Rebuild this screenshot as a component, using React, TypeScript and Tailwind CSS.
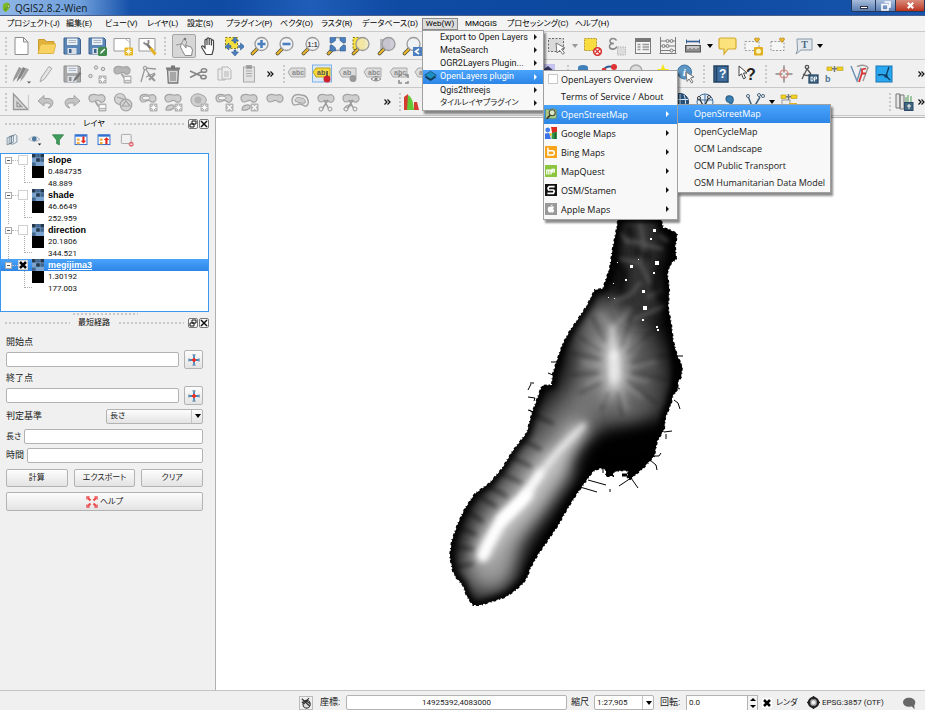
import React from "react";

const UI = "font-['Roboto','Liberation_Sans','Noto_Sans_CJK_JP',sans-serif] [font-feature-settings:'palt']";
const G = "#a3a3a3";
const L = "#cfcfcf";

/* ---------- small drawn parts shared by the toolbar icons ---------- */
const Blob = ({ f = L }: { f?: string }) => (
  <path d="M2 6c0-4 5-4 8-3 3 .6 4-1 6 0 3 1.500 2.500 6 0 7-2.500 1-3-1-5-1.500C9 8 8 10 5 10 3 10 2 8 2 6z" fill={f} stroke={G} strokeWidth="1.200" />
);
const Badge = ({ m = "star" }: { m?: string }) => (
  <g>
    <rect x="11.500" y="11.500" width="8" height="8" rx="1" fill="#b4b4b4" />
    {m === "star" ? (
      <path d="M15.500 12.500v6M12.500 15.500h6M13.400 13.400l4.200 4.200M17.600 13.400l-4.200 4.200" stroke="#fff" strokeWidth=".9" />
    ) : m === "x" ? (
      <path d="M13.300 13.300l4.400 4.400M17.700 13.300l-4.400 4.400" stroke="#fff" strokeWidth="1.300" />
    ) : (
      <path d="M13 17.500h5M13 13.500h5v2h-5z" fill="#fff" stroke="#fff" strokeWidth=".6" />
    )}
  </g>
);
const Lens = ({ children, f = "#eef3f7" }: { children?: React.ReactNode; f?: string }) => (
  <g>
    <path d="M2.500 17.500l4.500-4.500" stroke="#4a4a3a" strokeWidth="3.600" strokeLinecap="round" />
    <path d="M2.500 17.500l4-4" stroke="#eab62c" strokeWidth="2.200" strokeLinecap="round" />
    <circle cx="11.500" cy="8" r="6.500" fill={f} fillOpacity=".85" stroke="#9a9a9a" strokeWidth="1.300" />
    {children}
  </g>
);
const Floppy = ({ a = "#5b87b8", b = "#3f628c" }: { a?: string; b?: string }) => (
  <g>
    <path d="M2 2h15l1.500 1.500V18H2z" fill={a} stroke={b} />
    <rect x="5" y="2.500" width="10.500" height="6.500" fill="#e9eef4" />
    <path d="M6.500 4.500h7.500M6.500 6.500h7.500" stroke="#9ba9b8" strokeWidth=".8" />
    <rect x="5.500" y="12" width="9" height="6" fill="#d9dfe6" />
    <rect x="7" y="13" width="2.500" height="4" fill={b} />
  </g>
);
const Tag = ({ f = "#dcdcdc", s = "#aaa", t = "#8a8a8a", w = "abc" }: { f?: string; s?: string; t?: string; w?: string }) => (
  <g>
    <path d="M1 8l3-4h14v9H4z" fill={f} stroke={s} />
    <text x="5" y="11" fontSize="7" fontWeight="700" fill={t} fontFamily="Liberation Sans">{w}</text>
  </g>
);
const Sat = () => (
  <g>
    <rect x="3" y="3" width="5" height="3.500" fill="#f2d21f" stroke="#b39b1c" strokeWidth=".6" />
    <rect x="13" y="3" width="6" height="3.500" fill="#f2d21f" stroke="#b39b1c" strokeWidth=".6" />
    <path d="M8 4.700h5M10.500 2v6" stroke="#777" strokeWidth="1.500" />
  </g>
);
const Globe = () => (
  <g fill="none" stroke="#dbe9f7">
    <circle cx="10" cy="10" r="8.500" fill="#24507c" stroke="#1f3f60" />
    <path d="M2 7.500h16M2 12.500h16M10 2v16M6 3c-2 5-2 9 0 14M14 3c2 5 2 9 0 14" />
  </g>
);

const icons: Record<string, React.ReactNode> = {
  newfile: <path d="M4 1.500h8.500L17 6v12.500H4zM12.500 1.500V6H17" fill="#fff" stroke="#8c8c8c" />,
  open: <g><path d="M2.500 17V3.500h6l2 2H18V8" fill="#e2b23c" stroke="#c99a2c" /><path d="M2 17.500L4.500 8H20l-2.500 9.500z" fill="#f9d361" stroke="#d8aa35" strokeWidth=".8" /></g>,
  save: <Floppy />,
  saveas: <g><Floppy /><rect x="11" y="11" width="9" height="9" rx="1.500" fill="#3f8a4c" /><path d="M13 18l1-2.500 3.500-3 .8 1-3.300 3.500z" fill="#fff" /></g>,
  composer: <g><path d="M1 2.500h16V15H1z" fill="#fff" stroke="#9b9b9b" /><path d="M12 2.500l5 4" stroke="#bbb" /><rect x="11.500" y="11.500" width="8.500" height="8" rx="1" fill="#e6b51e" /><path d="M15.700 12.500v6M12.700 15.500h6M13.600 13.400l4.200 4.200M17.800 13.400l-4.200 4.200" stroke="#fff" /></g>,
  wrench: <g><path d="M1 2.500h16V15H1z" fill="#fff" stroke="#9b9b9b" /><path d="M9 8l4 5" stroke="#777" strokeWidth="2.600" /><path d="M12.500 12l5 6.500" stroke="#e4b12a" strokeWidth="3" /><path d="M5.500 6.500l2.500 2 2.500-1.500V4" fill="none" stroke="#888" strokeWidth="1.800" /></g>,
  touch: <g><path d="M2 9l5-1 3-5 3 3-2 4" fill="none" stroke="#999" /><circle cx="11" cy="3" r="1.300" fill="#777" /><path d="M7 8.500c.8-1 2-.3 2.600.6L12 12V9.500l5 1.500 1.500 3-1 5.500H11L8 14l-1.500-3z" fill="#fff" stroke="#888" /></g>,
  hand: <path d="M7 18.500L3 12c-1-1.700 0-2.500 1.200-1.800L6 12V4.500c0-1.500 2-1.500 2 0V9 3c0-1.500 2.200-1.500 2.200 0v6V3.600c0-1.500 2.200-1.500 2.200 0V9.500 5c0-1.500 2.100-1.500 2.100 0v8l-1.500 5.500z" fill="#fff" stroke="#444" strokeWidth="1.200" />,
  pansel: <g><rect x="1.500" y="1.500" width="12" height="11" fill="#f7df3e" stroke="#8d7c19" strokeDasharray="2 1.500" /><path d="M11 1l3.500 4H12v2h-2V5H7.500zM11 20l3.500-4H12v-2h-2v2H7.500zM1 10.500L5 7v2.500h2v2H5V14zM20.500 10.500L16.500 7v2.500h-2v2h2V14z" fill="#4b7fbd" stroke="#315c92" strokeWidth=".6" /></g>,
  zoomin: <Lens><path d="M11.500 4v8M7.500 8h8" stroke="#4b7fbd" strokeWidth="2.600" /></Lens>,
  zoomout: <Lens><path d="M7.500 8h8" stroke="#4b7fbd" strokeWidth="2.600" /></Lens>,
  zoom11: <Lens><text x="6.500" y="10.500" fontSize="7" fontWeight="700" fill="#444" fontFamily="Liberation Sans">1:1</text></Lens>,
  zoomfull: <g><Lens /><path d="M4 1.500h5.500v3l-2.500 2H4zM19.500 1.500v5h-3l-2.500-2v-3zM4 15V9.500h3l2.500 2.500v3zM19.500 15H14v-3l2.500-2.500h3z" fill="#4b7fbd" stroke="#315c92" strokeWidth=".6" /></g>,
  zoomsel: <g><rect x="2" y="1.500" width="11" height="12" fill="#f7df3e" stroke="#8d7c19" strokeDasharray="2 1.500" /><Lens f="#f3e9b4" /></g>,
  zoomlayer: <g><rect x="3" y="3" width="10" height="11" fill="#bbb" /><Lens f="#c9c6d4" /></g>,
  zoomlast: <g><Lens /><rect x="11" y="11" width="9" height="9" fill="#4b7fbd" /><path d="M17 13l-3.500 2.500L17 18" fill="none" stroke="#fff" strokeWidth="1.600" /></g>,
  select: <g><rect x="1.500" y="2.500" width="15" height="13" fill="#dadada" stroke="#666" strokeDasharray="2 1.500" /><path d="M9 7l9 5-3.500 1 3 4-1.800 1.300-3-4L10 17z" fill="#fff" stroke="#777" /></g>,
  deselect: <g><rect x="2.500" y="2.500" width="12" height="12" fill="#f9dc3f" stroke="#b49b2b" strokeDasharray="2 1" /><circle cx="15.500" cy="15.500" r="3.800" fill="#fff" stroke="#d8332f" strokeWidth="1.600" /><path d="M13 13l5 5M13 17.500l5-4.500" stroke="#d8332f" strokeWidth="1.200" /></g>,
  expr: <g><path d="M9.500 4.500C8 1.500 3 2 3 5c0 1.800 1.800 2.500 4 2.500C4 7.500 2.500 8.500 2.500 10.500c0 3.500 6 3.500 7.500 0" fill="none" stroke="#8b8b8b" strokeWidth="1.600" /><rect x="10.500" y="11" width="8" height="8" fill="#dcdcdc" stroke="#b6b6b6" strokeDasharray="1.500 1" /></g>,
  table: <g><rect x="2.500" y="2.500" width="15" height="15" fill="#f4f4f4" stroke="#7a7a7a" /><path d="M3 4.500h14" stroke="#777" strokeWidth="3" /><path d="M4.500 8.500h3M4.500 11h3M4.500 13.500h3M9.500 8.500h6.500M9.500 11h6.500M9.500 13.500h6.500" stroke="#999" strokeWidth="1.400" /></g>,
  abacus: <g fill="none" stroke="#7d7d7d"><path d="M2.500 1v17M17.500 1v17M1.500 17.500h17M3 5h14M3 10h14M3 14.500h14" /><path d="M8 5a1.500 1.500 0 103 0 1.500 1.500 0 10-3 0M12 5a1.500 1.500 0 103 0 1.500 1.500 0 10-3 0M4 10a1.500 1.500 0 103 0 1.500 1.500 0 10-3 0M8 10a1.500 1.500 0 103 0 1.500 1.500 0 10-3 0M12 14.500a1.500 1.500 0 103 0 1.500 1.500 0 10-3 0" fill="#e8e8e8" /></g>,
  ruler: <g><path d="M3 5.500h14" stroke="#2f5f96" strokeWidth="1.600" /><path d="M3.500 3.500v4M16.500 3.500v4" stroke="#2f5f96" /><rect x="2.500" y="9.500" width="15" height="6.500" fill="#8f8f8f" stroke="#555" /><path d="M5 10v3M7 10v2M9 10v3M11 10v2M13 10v3M15 10v2" stroke="#fff" /></g>,
  balloon: <path d="M4 2h13q2 0 2 2v7q0 2-2 2h-6l-4 5v-5H4q-2 0-2-2V4q0-2 2-2z" fill="#fbe27a" stroke="#d2aa2c" strokeWidth="1.200" />,
  bookadd: <g><rect x="2" y="5.500" width="14" height="9" fill="#f6f6f6" stroke="#999" strokeDasharray="2 1.500" /><path d="M14 6.500l-2.500-3c0-2 2-2 2.500-.8.500-1.200 2.500-1.200 2.500.8z" fill="#eab62c" stroke="#b88a18" strokeWidth=".8" /><rect x="11" y="11" width="9" height="8.500" rx="1" fill="#e2b01e" /><circle cx="15.500" cy="15.300" r="2.500" fill="#fff3bf" /></g>,
  book: <g><rect x="3" y="5.500" width="13" height="9" fill="#f6f6f6" stroke="#999" strokeDasharray="2 1.500" /><path d="M14 6.500l-2.500-3c0-2 2-2 2.500-.8.500-1.200 2.500-1.200 2.500.8z" fill="#eab62c" stroke="#b88a18" strokeWidth=".8" /></g>,
  textann: <g><path d="M3 3h15v11H7l-5 4 1.500-4z" fill="#e3e8ed" stroke="#8798a8" /><text x="7.200" y="12" fontSize="10" fontWeight="700" fill="#4c6a86" fontFamily="Liberation Serif">T</text></g>,
  pencils: <g><path d="M1.500 18l1.500-5L8 3l3 1.500-5 9z" fill="#9a9a9a" /><path d="M5.500 18L7 13l5-10 3 1.500-5 9z" fill="#858585" /><path d="M9 18l1.500-5L15 4l3 1.500-5 8z" fill="#a5a5a5" /><path d="M16 17.500h4l-2 2z" fill="#555" /></g>,
  pencil: <path d="M4 18l1.500-5L13 2.500l3 2L8.500 15z" fill="#e3e3e3" stroke="#aaa" />,
  saveg: <g><Floppy a="#a9a9a9" b="#8f8f8f" /><path d="M11 18l1.500-4 5-6 2 1.500-5 6z" fill="#777" /></g>,
  dots: <g><g fill="#e2e2e2" stroke="#999"><circle cx="9" cy="3.500" r="1.700" /><circle cx="16" cy="5" r="1.700" /><circle cx="3.500" cy="12" r="1.700" /></g><Badge /></g>,
  blobadd: <g><Blob f="#b5b5b5" /><path d="M9 10c2 0 2 4 5 5" fill="none" stroke={G} strokeWidth="2" /><Badge m="h" /></g>,
  node: <g fill="none" stroke="#999"><path d="M3 18L7 4l11 1M7 4l8 12M8 13l9-4" strokeWidth="1.300" /><circle cx="7" cy="4" r="1.800" fill="#ddd" /><path d="M10 10l7 7M17 10l-6 6" strokeWidth="2" /></g>,
  trash: <g fill="none" stroke="#777"><path d="M4.500 6h11l-.8 13H5.300z" fill="#d8d8d8" strokeWidth="1.300" /><path d="M3 4.500h14M8 2.500h4" strokeWidth="1.800" /><path d="M8 8v9M10 8v9M12 8v9" /></g>,
  cut: <g fill="none" stroke="#858585" strokeWidth="1.500"><path d="M2 7l11 5M2 13.500l12-6" /><ellipse cx="16" cy="6.500" rx="2.700" ry="1.800" /><ellipse cx="15.500" cy="13" rx="2.700" ry="1.800" /></g>,
  copy: <g fill="#ededed" stroke="#b5b5b5"><path d="M4 5h7v11H4z" /><path d="M8 3h6l3 3v9H8zM10 8h5M10 10h5M10 12h5" /></g>,
  paste: <g fill="#e3e3e3" stroke="#a9a9a9"><rect x="4.500" y="3" width="11" height="15" /><rect x="7.500" y="1.500" width="5" height="3" fill="#999" /><path d="M7 7h6M7 9.500h6M7 12h6" /></g>,
  tag: <Tag />,
  tagy: <g><rect x=".5" y="1" width="19" height="17" fill="#dce9f8" stroke="#7fb0e6" /><Tag f="#f6da3b" s="#bfa321" t="#555" w="ab" /><circle cx="15" cy="15" r="3.500" fill="#cf2030" /><path d="M15 12V7" stroke="#444" strokeWidth="1.500" /></g>,
  tagpin: <g><Tag w="ab" /><circle cx="15" cy="14.500" r="3.500" fill="#999" /></g>,
  tageye: <g><Tag /><path d="M8 15q5-5 10 0-5 4-10 0z" fill="#f4f4f4" stroke="#888" /><circle cx="13" cy="15" r="1.700" fill="#888" /></g>,
  tagbox: <g><Tag /><path d="M10 11h3M16 11h3v3M19 17v2h-3M13 19h-3v-3M10 13v-2" fill="none" stroke="#888" strokeWidth="1.500" /></g>,
  purple: <g><rect x="0" y="0" width="14" height="14" fill="#c4c3ef" /><path d="M2 6l5-4 6 5" fill="#33335c" /></g>,
  bluecyl: <g><ellipse cx="8" cy="3.500" rx="5" ry="2.500" fill="#3f80b8" /><path d="M3 4v8h10V4" fill="#3f80b8" /></g>,
  red: <g><path d="M3 7q3-6 10-4" stroke="#2f5f96" fill="none" strokeWidth="2" /><circle cx="14" cy="3" r="3" fill="#d33" /><circle cx="4" cy="6" r="2.300" fill="#d33" /></g>,
  grayo: <circle cx="10" cy="7" r="6" fill="#ddd" stroke="#aaa" strokeWidth="1.500" />,
  star: <path d="M12 0l2 5 4 0-3 4 1 5-4-3-4 3 1-5-3-4h4z" fill="#f7e21c" />,
  info: <g><circle cx="8.500" cy="8" r="7" fill="#5f97c4" stroke="#3e75a4" /><text x="6.800" y="12" fontSize="11" fontStyle="italic" fontWeight="700" fill="#fff" fontFamily="Liberation Serif">i</text><path d="M10 8l8 5-3.500 1 2.500 4-1.500 1-2.500-4-2 2.500z" fill="#fff" stroke="#777" /></g>,
  helpbook: <g><path d="M3 2h14v16H3z" fill="#3e6ea0" stroke="#22405f" strokeWidth="1.400" /><path d="M5.500 2v16" stroke="#22405f" strokeWidth="1.500" /><text x="8" y="14" fontSize="12" fontWeight="700" fill="#fff" fontFamily="Liberation Sans">?</text></g>,
  whats: <g><path d="M2 2l8 7H6.500l2 5-2 .8-2-5L2 12z" fill="#fff" stroke="#444" /><text x="9" y="16" fontSize="16" fontWeight="700" fill="#222" fontFamily="Liberation Sans">?</text></g>,
  cross: <g fill="none" stroke="#777"><path d="M10 1.500v7M10 11.500v7M1.500 10h7M11.500 10h7" stroke="#555" /><circle cx="10" cy="10" r="4" stroke="#e07a72" strokeWidth="1.200" /></g>,
  compass: <g fill="none" stroke="#555" strokeWidth="1.300"><circle cx="8" cy="3" r="1.700" /><path d="M8 5L3 15M8 5l4 5M4 10q4 3 8 0" /><rect x="10" y="11" width="9" height="8" fill="#3e6687" stroke="#2b4c68" /><path d="M12 17v-4h1.500q1.500 2 0 4zM15.500 17.500V13h2v2h-2" stroke="#fff" strokeWidth=".9" /></g>,
  sat: <g><Sat /><text x="1" y="18" fontSize="9" fontWeight="700" fill="#4d7493" fontFamily="Liberation Sans">b</text></g>,
  topo: <g fill="none" strokeWidth="1.400"><path d="M2 2l6 15L12 4" stroke="#6a8fb1" /><path d="M8 2.500q8-3 11 1L14 17" stroke="#999" /><path d="M17 4.500l-4 1v4h4M13 9l-3 9" stroke="#d83434" strokeWidth="1.800" /></g>,
  bluesq: <g><rect x="2" y="2" width="16" height="16" fill="#2aa7ee" stroke="#1975b5" /><path d="M4 11q5-1 8 1l4 4M12 12l3-9" fill="none" stroke="#0d3d60" strokeWidth="1.300" /><circle cx="12" cy="12" r="1.800" fill="#0d3d60" /></g>,
  triangle: <g fill="#dadada" stroke="#999" strokeWidth="1.300"><path d="M2.500 2v15.500H17z" /><path d="M6 10v4.500h4.500z" fill="#f0f0f0" /><path d="M17.500 3v15" stroke="#ccc" /></g>,
  undo: <path d="M8 3.500v3h4c7 0 6 9 0 9.500 3-2 3-5 0-5H8v3L2 9z" fill="#c4c4c4" stroke="#a2a2a2" />,
  redo: <path d="M12 3.500v3H8c-7 0-6 9 0 9.500-3-2-3-5 0-5h4v3L18 9z" fill="#c4c4c4" stroke="#a2a2a2" />,
  blobh: <g><Blob /><path d="M8 10c2 0 2 4 5 5" fill="none" stroke={G} strokeWidth="2" /><Badge m="h" /></g>,
  circles: <g fill="#d4d4d4" stroke={G} strokeWidth="1.200"><circle cx="7" cy="7" r="5.500" /><circle cx="13" cy="13" r="5.800" /><path d="M4 5l9 3M9 14l4-5 4 5z" /></g>,
  ring: <g><Blob /><ellipse cx="8" cy="6" rx="4" ry="2" fill="#f3f3f3" stroke={G} /><Badge /></g>,
  part: <g><Blob /><path d="M3 18c0-5 6-6 8-4 1 2-3 5-8 4z" fill={L} stroke={G} strokeWidth="1.200" /><Badge /></g>,
  fillr: <g><path d="M2 9c-1-6 6-9 11-6 6 2 5 8 1 10C8 16 3 14 2 9z" fill={L} stroke={G} /><circle cx="9" cy="8" r="3.500" fill="#b4b4b4" /><Badge /></g>,
  ringx: <g><Blob /><ellipse cx="8" cy="6" rx="4" ry="2" fill="#f3f3f3" stroke={G} /><Badge m="x" /></g>,
  partx: <g><Blob /><path d="M3 18c0-5 6-6 8-4 1 2-3 5-8 4z" fill={L} stroke={G} strokeWidth="1.200" /><Badge m="x" /></g>,
  reshape: <Blob />,
  offset: <g><path d="M2 9c0-7 6-7 9-6 6 0 8 5 7 9-2 5-5 0-8 0-4 0-7 4-8-3z" fill="#ececec" stroke={G} strokeWidth="1.400" /><path d="M5 9c0-4 4-4 6-3 3 0 5 2 4 5-2 1-8-1-10-2z" fill={L} stroke={G} /></g>,
  split: <g><Blob /><path d="M5 19l7-11M14 19L8 8" stroke="#999" strokeWidth="1.500" /><circle cx="5" cy="17" r="2" fill="#eee" stroke="#999" /><circle cx="14" cy="17" r="2" fill="#eee" stroke="#999" /></g>,
  split2: <g><Blob /><path d="M3 18c0-5 6-6 8-4" fill={L} stroke={G} /><path d="M5 19l7-11M14 19L8 8" stroke="#999" strokeWidth="1.500" /><circle cx="5" cy="17" r="2" fill="#eee" stroke="#999" /><circle cx="14" cy="17" r="2" fill="#eee" stroke="#999" /></g>,
  hist: <g><path d="M2 18V5l4-3v16z" fill="#d63b2f" /><path d="M5 18l1-15q5 2 6 15z" fill="#63c837" /><path d="M12 18v-8h3l2 8z" fill="#d63b2f" /></g>,
  globe: <Globe />,
  globev: <g><g fill="#e8f0f8" stroke="#3f6f9f"><circle cx="10" cy="10" r="8" /><path d="M2 8h16M10 2v16" /></g><path d="M4 6l5 9 5-10" fill="none" stroke="#333" strokeWidth="1.300" /><circle cx="4" cy="6" r="1.500" fill="#fff" stroke="#333" /><circle cx="14" cy="5" r="1.500" fill="#fff" stroke="#333" /></g>,
  comma: <g><path d="M6 14c6-1 8-4 7-8-1-3-7-3-7 1 0 3 3 4 5 3" fill="#3c7fb0" stroke="#2a648f" strokeWidth="1.200" /><rect x="12" y="12" width="7" height="6" fill="#6fbf55" /></g>,
  vnode: <g><path d="M3 4l5 13L15 5" fill="none" stroke="#44617a" strokeWidth="1.500" /><g fill="#fff" stroke="#44617a"><circle cx="3" cy="4" r="1.500" /><circle cx="14" cy="3" r="1.500" /><circle cx="18" cy="4" r="1.500" /></g><rect x="12" y="12" width="7" height="6" fill="#e6b51e" /></g>,
  satbox: <g><rect x="4" y="8" width="8" height="9" fill="#eee" stroke="#999" /><rect x="11" y="11" width="8" height="7" fill="#e6b51e" /><Sat /></g>,
  gras: <g fill="#e6e6e6" stroke="#777"><path d="M2 2h4v14H2zM6 3h4v14H6z" /><path d="M12 12V5M14 12V3M17 12V4" stroke="#4f9b55" /><rect x="10.500" y="10.500" width="8.500" height="8" fill="#42647e" stroke="#2b4c68" /><path d="M13 14h4M15 12v5" stroke="#fff" /></g>,
  layers: <g fill="#e8eef4" stroke="#5f7586"><path d="M3 7l6-3v10l-6 3zM6 6l6-3v10l-6 3zM9 5l6-3 2 2v9l-6 3H9z" /></g>,
  eye: <g><path d="M1 9q8-8 16 0-8 6-16 0z" fill="#e9eef2" stroke="#98a4ae" /><circle cx="9" cy="8.500" r="3.400" fill="#4b779e" /><path d="M14 15h5l-2.500 3z" fill="#222" /></g>,
  filter: <path d="M2 2.500h16L12 10v7l-4-2v-5z" fill="#3f9d5b" stroke="#2a7a42" />,
  expand: <g><rect x="1.500" y="2.500" width="17" height="14" fill="#fff" stroke="#2f6fd0" strokeWidth="1.400" /><path d="M2 4h16" stroke="#2f6fd0" strokeWidth="2.500" /><path d="M4 8h4v3H4zM4 13h4v3H4z" fill="#f3ad3a" /><path d="M12 5h3v6h2.500l-4 4-4-4H12z" fill="#e3261c" /></g>,
  collapse: <g><rect x="1.500" y="2.500" width="17" height="14" fill="#fff" stroke="#2f6fd0" strokeWidth="1.400" /><path d="M2 4h16" stroke="#2f6fd0" strokeWidth="2.500" /><path d="M4 8h4v3H4zM4 13h4v3H4z" fill="#f3ad3a" /><path d="M12 16h3v-6h2.500l-4-4-4 4H12z" fill="#e3261c" /></g>,
  remove: <g><rect x="2" y="2" width="14" height="13" rx="1" fill="#f1f1f1" stroke="#aaa" strokeWidth="1.400" /><circle cx="16" cy="16" r="3.500" fill="#e0656b" /><path d="M14 16h4" stroke="#fff" strokeWidth="1.500" /></g>,
  target: <g><path d="M10 1v18M1 10h18" stroke="#4187c0" strokeWidth="3" /><path d="M7 1.500h6M7 18.500h6M1.500 7v6M18.500 7v6" stroke="#8a9aa8" strokeWidth="1.600" /><path d="M10 6.500v7M6.500 10h7" stroke="#e8322a" strokeWidth="3.600" /></g>,
  lifebuoy: <g fill="none" stroke="#ec4b4b" strokeWidth="3.600"><path d="M3 3l4.500 4.500M17 3l-4.500 4.500M3 17l4.500-4.500M17 17l-4.500-4.500" /><path d="M1.500 6V1.500H6M14 1.500h4.500V6M1.500 14v4.500H6M18.500 14v4.500H14" strokeWidth="2" /></g>,
  raster: <g><path d="M0 0h20v20H0z" fill="#7aa4cf" /><path d="M0 0h6v6H0zM14 0h6v6h-6zM7 7h6v6H7z" fill="#26384c" /><path d="M7 0h6v6H7zM0 14h6v6H0zM14 7h6v6h-6z" fill="#41658c" /></g>,
  olayers: <g><path d="M10 5l9 6-9 6-9-6z" fill="#143a52" /><path d="M10 2l9 6-9 6-9-6z" fill="#1c8fc4" stroke="#173f58" /></g>,
  osm: <g><path d="M1 2l6 1 6-2 6 2v14l-6 1-6-1-6 1z" fill="#a8cf8c" stroke="#5e7f48" /><path d="M2 6l8 7M4 14l6-5" stroke="#d99b42" /><circle cx="12" cy="8" r="5" fill="#eaf3e4" fillOpacity=".7" stroke="#4a4a3a" strokeWidth="1.800" /><path d="M8.500 12L3 18" stroke="#353525" strokeWidth="2.800" /></g>,
  google: <g><path d="M0 0h20v20H0z" fill="#fff" /><path d="M10 0h10v9l-8 2z" fill="#e02b20" /><path d="M11 10l9-2v12h-9z" fill="#2d9a45" /><path d="M0 11l7-1 3 10H0z" fill="#3b73e8" /><circle cx="4.500" cy="5" r="4" fill="#4382ee" /><path d="M7 9l5 3-3 4z" fill="#f4c21c" /><path d="M17 10v10" stroke="#2c2c2c" strokeWidth="1.500" /></g>,
  bing: <g><rect width="20" height="20" rx="1" fill="#f8a51b" /><path d="M5 3v12h7a3.500 3.500 0 000-7H5" fill="none" stroke="#fff" strokeWidth="2.500" /></g>,
  mapquest: <g><rect width="20" height="20" rx="1" fill="#8cc63f" /><path d="M3 16V8.500h7V16M6.500 9v7M12 7.500h3.500v4H12z" fill="none" stroke="#fff" strokeWidth="2.200" /></g>,
  stamen: <g><rect width="20" height="20" fill="#111" /><path d="M16 4.500H7L5 7l1 3h8l1.500 2-1.500 3.500H4" fill="none" stroke="#fff" strokeWidth="2.800" /></g>,
  apple: <g><rect width="20" height="20" fill="#999" /><path d="M10 6.500c2-1.500 4-1 5 .5-2 1.500-1.500 4 .5 5-1 3-2.500 5-4 4-1-.6-2-.6-3 0-2 1-4-3-4-6 0-3.500 3-5 5.500-3.500zM10 5.500c0-2 1-3 2.500-3.500 0 2-1 3-2.500 3.500z" fill="#fff" /></g>,
  mouse: <g><ellipse cx="11" cy="12" rx="6" ry="6.500" fill="#ddd" stroke="#333" strokeWidth="1.800" /><path d="M3 3l13 12M9 6l8 5M6 12l5-6M11 6l4-4M3 8l3 2" fill="none" stroke="#333" strokeWidth="2" /></g>,
  crs: <g><circle cx="10" cy="10" r="7" fill="#aaa" stroke="#222" strokeWidth="3.500" /><path d="M10 0v5M10 15v5M0 10h5M15 10h5" stroke="#222" strokeWidth="2.500" /><circle cx="10" cy="10" r="3" fill="#eee" /></g>,
  bubble: <path d="M10 2.500c-5 0-8.500 2.800-8.500 6.500s3.500 6.500 8.500 6.500l4-.5 4 4-.5-5.500c1-1.200 1.500-2.800 1.500-4.500 0-3.700-4-6.500-9-6.500z" fill="#686868" />,
  qgis: <g><path d="M4 4q7-6 12 0 1 8-7 14-8-1-5-14z" fill="#7bb928" /><path d="M7 15L14 4l2 5-5 1z" fill="#f6f2a0" stroke="#3d6b1a" /></g>,
};

const Icon = ({ n, c = "size-5" }: { n: string; c?: string }) => (
  <svg viewBox="0 0 20 20" className={`${c} shrink-0`} aria-hidden="true">{icons[n]}</svg>
);

const Tool = ({ n }: { n: string }) => (
  <button type="button" aria-label={n} className="flex size-5 shrink-0 items-center justify-center"><Icon n={n} /></button>
);
const Group = ({ w, items }: { w: string; items: string }) => (
  <div className={`flex shrink-0 items-center justify-between ${w}`}>{items.split(" ").map((n, i) => <Tool key={i} n={n} />)}</div>
);
const Grip = ({ w }: { w: string }) => (
  <div className={`flex h-full shrink-0 justify-center py-1 ${w}`}>
    <div className="w-1 bg-[radial-gradient(circle,#c9c9c9_1px,transparent_1px)] bg-[length:4px_4px]" />
  </div>
);
const Drop = ({ w, c = "border-t-black" }: { w: string; c?: string }) => (
  <button type="button" aria-label="more" className={`flex shrink-0 justify-center ${w}`}>
    <span className={`border-x-[3px] border-t-4 border-x-transparent ${c}`} />
  </button>
);
const More = ({ w }: { w: string }) => (
  <button type="button" aria-label="overflow" className={`flex shrink-0 justify-center ${w}`}>
    <svg viewBox="0 0 7 6" className="h-[6px] w-[7px]"><path d="M.5.500L3 3 .5 5.500M3.500.500L6 3 3.500 5.500" fill="none" stroke="#111" strokeWidth="1.200" /></svg>
  </button>
);
const Bar = ({ children }: { children: React.ReactNode }) => (
  <div className="flex h-7 items-center overflow-hidden border-b border-[#c9c9c9] bg-[#f0f0f0]">{children}</div>
);

const Arrow = () => <span className="ml-auto border-y-[3px] border-l-[3px] border-y-transparent border-l-current" />;
const HL = "bg-linear-to-b from-[#4aa3fb] to-[#2c86e6] text-white";
const MENU = "absolute border border-[#a0a0a0] bg-[#f8f8f8] shadow-[2px_3px_2px_rgba(0,0,0,.45)]";

function OsmMenu() {
  return (
    <ul className={`${MENU} -top-px left-full z-30 w-[154px] pb-px`}>
      {["OpenStreetMap", "OpenCycleMap", "OCM Landscape", "OCM Public Transport", "OSM Humanitarian Data Model"].map((t, i) => (
        <li key={t}>
          <button type="button" className={`flex w-full items-center pl-4 whitespace-nowrap ${i === 0 ? "h-[18px] " + HL : "h-[17px] text-[#1a1a1a]"}`}>{t}</button>
        </li>
      ))}
    </ul>
  );
}

function OpenLayersMenu() {
  const rows = [["osm", "OpenStreetMap"], ["google", "Google Maps"], ["bing", "Bing Maps"], ["mapquest", "MapQuest"], ["stamen", "OSM/Stamen"], ["apple", "Apple Maps"]];
  return (
    <ul className={`${MENU} top-0 left-full z-20 w-[135px] font-['Open_Sans','Noto_Sans',sans-serif] text-[9px] text-[#111]`}>
      <li>
        <label className="flex h-[17px] items-center gap-[3px] pl-1">
          <input type="checkbox" className="size-[10px] appearance-none border border-[#c8c8c8] bg-white" />OpenLayers Overview
        </label>
      </li>
      <li><button type="button" className="flex h-[17px] items-center pl-[17px] whitespace-nowrap">Terms of Service / About</button></li>
      {rows.map(([n, t], i) => (
        <li key={t} className="relative">
          <button type="button" className={`flex h-[19px] w-full items-center gap-1 pr-2 pl-px ${i === 0 ? HL : ""}`}>
            <Icon n={n} c="size-3" />{t}<Arrow />
          </button>
          {i === 0 && <OsmMenu />}
        </li>
      ))}
    </ul>
  );
}

function WebMenu() {
  const rows = ["Export to Open Layers", "MetaSearch", "OGR2Layers Plugin...", "OpenLayers plugin", "Qgis2threejs", "タイルレイヤプラグイン"];
  return (
    <ul className={`${MENU} top-full left-0 z-10 w-[122px]`}>
      {rows.map((t, i) => (
        <li key={t} className="relative">
          <button type="button" className={`flex w-full items-center pr-[6px] whitespace-nowrap ${i === 5 ? "text-[8px]" : "text-[9px]"} ${i === 3 ? "h-[14px] pl-px " + HL : "h-[13px] pl-[17px] text-[#1a1a1a]"}`}>
            {i === 3 && <span className="flex w-4"><Icon n="olayers" c="size-[13px]" /></span>}{t}<Arrow />
          </button>
          {i === 3 && <OpenLayersMenu />}
        </li>
      ))}
    </ul>
  );
}

const menus = [
  ["プロジェクト(J)", "w-[59px]"], ["編集(E)", "w-[39px]"], ["ビュー(V)", "w-[42px]"], ["レイヤ(L)", "w-10"], ["設定(S)", "w-[39px]"],
  ["プラグイン(P)", "w-[54px]"], ["ベクタ(O)", "w-[41px]"], ["ラスタ(R)", "w-[41px]"], ["データベース(D)", "w-[60px]"],
];

function DockTitle({ t }: { t: string }) {
  const dots = "h-1 flex-1 bg-[radial-gradient(circle,#c9c9c9_1px,transparent_1px)] bg-[length:4px_4px]";
  const b = "flex size-[10px] items-center justify-center rounded-xs border border-[#777] bg-[#f6f6f6]";
  return (
    <div className="flex h-[14px] items-center gap-1 pr-px pl-1">
      <div className={dots} /><h2 className="px-1 text-[8px] text-black">{t}</h2><div className={dots} />
      <div className="flex gap-px">
        <button type="button" aria-label="float" className={b}><svg viewBox="0 0 8 8" className="size-2"><path d="M3 1h4v3H3zM1 4h4v3H1z" fill="#fff" stroke="#111" /></svg></button>
        <button type="button" aria-label="close" className={b}><svg viewBox="0 0 8 8" className="size-2"><path d="M1 1l6 6M7 1L1 7" stroke="#111" strokeWidth="1.500" /></svg></button>
      </div>
    </div>
  );
}

function Tree() {
  const layers = [["slope", "0.484735", "48.889"], ["shade", "46.6649", "252.959"], ["direction", "20.1806", "344.521"], ["megijima3", "1.30192", "177.003"]];
  return (
    <ul className="mr-px h-[159px] border border-[#3b97f0] bg-white text-[8px] text-[#111]">
      {layers.map(([n, a, b], i) => {
        const on = i === 3;
        return (
          <li key={n} className="h-[35px]">
            <label className={`flex h-3 items-center pl-1 ${on ? HL : ""}`}>
              <span className="flex size-[7px] items-center justify-center border border-[#aaa] bg-white"><span className="h-px w-[3px] bg-[#555]" /></span>
              <span className="w-[6px] border-t border-dotted border-[#bbb]" />
              <span className="grid">
                <input type="checkbox" defaultChecked={on} className="col-start-1 row-start-1 size-[10px] appearance-none border border-[#d0d0d0] bg-white" />
                {on && <svg viewBox="0 0 10 10" className="col-start-1 row-start-1 size-[10px]"><path d="M2 2l6 6M8 2L2 8" stroke="#000" strokeWidth="2.500" /></svg>}
              </span>
              <Icon n="raster" c="ml-[4px] size-3" />
              <span className={`ml-1 font-['Liberation_Sans',sans-serif] text-[9px] font-bold ${on ? "underline" : "text-black"}`}>{n}</span>
            </label>
            <div className="flex pl-[7px]">
              <div className={`w-4 ${on ? "" : "border-l border-dotted border-[#aaa]"}`} />
              <div className="h-[17px] w-2 border-b border-l border-dotted border-[#aaa]" />
              <div className="size-3 bg-black" />
              <div className="pl-1"><p className="h-3 leading-3">{a}</p><p className="h-[11px] leading-[11px]">{b}</p></div>
            </div>
          </li>
        );
      })}
    </ul>
  );
}

const FIELD = "h-[15px] min-w-0 flex-1 rounded-xs border border-[#b3b3b3] bg-white text-[8px]";
const BTN = "flex items-center justify-center rounded-xs border border-[#b3b3b3] bg-linear-to-b from-[#fdfdfd] to-[#e3e3e3] text-[8px]";

function PointField({ id, t }: { id: string; t: string }) {
  return (
    <div className="h-9">
      <label htmlFor={id} className="block h-[14px] leading-[12px]">{t}</label>
      <div className="flex items-center gap-[5px]">
        <input id={id} className={FIELD} />
        <button type="button" aria-label={t} className={`${BTN} size-[19px]`}><Icon n="target" c="size-3" /></button>
      </div>
    </div>
  );
}

function Terrain() {
  const outline = "M619 214 L660 216 663 227 670 229 677 233 675 246 676 258 671 262 667 272 669 287 668 307 671 323 673 340 677 355 682 365 681 376 678 380 677 390 673 393 671 402 665 417 664 428 657 440 654 455 643 467 630 478 627 476 629 470 622 469 613 471 613 475 606 475 606 468 600 467 593 470 587 478 577 492 570 503 564 513 558 524 545 543 538 553 530 567 527 576 523 582 514 590 505 596 493 600 480 604 473 604 467 595 463 584 456 576 453 570 450 555 452 540 458 523 465 508 475 493 490 482 502 468 513 450 527 432 532 413 537 399 542 385 552 384 553 373 557 360 563 343 570 330 577 320 587 305 595 289 603 288 610 267 613 247 617 227z";
  const specks = [[654, 229, 3], [651, 238, 2], [656, 261, 4], [631, 265, 3], [654, 272, 2], [626, 279, 2], [643, 290, 3], [644, 306, 4], [643, 319, 2], [657, 326, 2], [658, 329, 2], [614, 283, 1], [609, 297, 1], [615, 298, 1], [618, 262, 1], [639, 259, 1]];
  const area = { filterUnits: "userSpaceOnUse" as const, x: 400, y: 180, width: 340, height: 460 };
  return (
    <svg className="block h-full w-full" role="img" aria-label="megijima3">
      <defs>
        <clipPath id="isle"><path d={outline} /></clipPath>
        <filter id="b2" {...area}><feGaussianBlur stdDeviation="2" /></filter>
        <filter id="b3" {...area}><feGaussianBlur stdDeviation="3" /></filter>
        <filter id="b8" {...area}><feGaussianBlur stdDeviation="8" /></filter>
        <filter id="b14" {...area}><feGaussianBlur stdDeviation="14" /></filter>
      </defs>
      <g transform="translate(-216 -117)">
        <path d={outline} fill="#000" stroke="#000" strokeWidth="2" strokeDasharray="3 2 1 3" />
        <g clipPath="url(#isle)" fill="none" strokeLinecap="round" strokeLinejoin="round">
          <path d="M606 325L598 390 562 430 526 480 496 525 484 572" stroke="#777" strokeWidth="54" filter="url(#b14)" />
          <path d="M616 335L622 370 628 400" stroke="#777" strokeWidth="56" filter="url(#b14)" />
          <path d="M644 345l10 30-15 30" stroke="#555" strokeWidth="26" filter="url(#b14)" />
          <path d="M640 225L642 300" stroke="#333" strokeWidth="40" filter="url(#b8)" />
          <path d="M550 468L528 500 502 532 492 565" stroke="#999" strokeWidth="38" filter="url(#b8)" />
          <path d="M578 430L548 468 526 500 502 526 484 552" stroke="#ccc" strokeWidth="18" filter="url(#b8)" />
          <path d="M614 345L614 385" stroke="#c4c4c4" strokeWidth="22" filter="url(#b8)" />
          <path d="M584 424L560 448 542 470 522 500 498 524 482 556" stroke="#fff" strokeWidth="4" filter="url(#b3)" />
          <path d="M540 472L522 498 500 518" stroke="#fff" strokeWidth="7" filter="url(#b3)" />
          <path d="M527 494L500 522 487 545 483 555" stroke="#fff" strokeWidth="11" filter="url(#b3)" />
          <path d="M612 326L614 384" stroke="#fff" strokeOpacity=".8" strokeWidth="4" filter="url(#b3)" />
          <path d="M614 354L615 376" stroke="#fff" strokeWidth="8" filter="url(#b3)" />
          <path d="M614 366L590 342M614 360L600 335M614 366L582 362M614 370L586 384M616 366L640 340M616 362L628 335M616 368L655 360M616 372L648 380M616 374L642 396M614 375L626 408M614 375L604 402M612 330L630 308M612 330L600 312" stroke="#ccc" strokeOpacity=".5" strokeWidth="3" filter="url(#b3)" />
          <path d="M600 350l-20-14M600 358l-28-6M598 372l-26 2M600 382l-20 10M628 352l22-20M632 362l36-8M632 372l34 6M628 380l28 22M622 345l10-30M604 340l-12-24M618 392l4 22M608 392l-6 16" stroke="#000" strokeOpacity=".28" strokeWidth="3" filter="url(#b2)" />
          <path d="M640 222L644 243 662 248M644 243L626 238M644 243L640 262 650 282M620 258L640 262M634 318L667 304M620 232l8 10M660 235l8 5M640 282l-10 12-16 6M648 296l12-6" stroke="#888" strokeOpacity=".45" strokeWidth="3" filter="url(#b2)" />
          <path d="M615 262L625 272 620 290M660 262L655 285 662 300M634 250L650 256M628 226l4 10" stroke="#000" strokeOpacity=".8" strokeWidth="5" filter="url(#b3)" />
          <path d="M502 473l18 8M513 457l17 8M524 440l16 8M534 414l18 8M490 486l16 9M480 496l15 9M468 511l14 9M461 527l14 6M456 546l16 2M458 566l14-3" stroke="#000" strokeOpacity=".4" strokeWidth="4" filter="url(#b2)" />
          <path d="M602 476Q592 462 602 452T655 436" stroke="#000" strokeWidth="28" filter="url(#b8)" />
          <path d="M676 350V400L655 450" stroke="#000" strokeWidth="8" filter="url(#b3)" />
          <path d={outline} stroke="#000" strokeWidth="8" filter="url(#b3)" />
        </g>
        {specks.map(([x, y, s]) => <rect key={`${x}-${y}`} x={x - 1} y={y - 1} width={s} height={s} fill="#fff" />)}
        <g fill="none" stroke="#000">
          <path d="M551 361h6M548 372l5 2M530 382h4M531 383l-3 6M528 396l7 1-1 3M528 409l6 2M529 409l5 3M676 355h7M676 386l4 2M674 399l4 3 2 6M664 431l8-1M666 433l0 5M653 455l6 0 2-3M650 459l6 5 1 5M619 485l12-8 7 10M588 479l18 5M580 486l17 5M603 468v4M610 488v3" />
          <path d="M622 474h5" strokeWidth="3" />
        </g>
      </g>
    </svg>
  );
}

export default function App() {
  return (
    <div className={`flex h-screen flex-col overflow-hidden bg-[#f0f0f0] text-[9px] leading-none text-[#1a1a1a] ${UI}`}>
      <header className="flex h-[15px] shrink-0 items-center bg-[linear-gradient(90deg,#8fb6e6_0,#6f9fdc_80px,#1651a9_130px,#0f4aa3_220px,#1f5db8_310px,#0f4aa3_400px,#0d489f_70%,#1855ad_100%)]">
        <Icon n="qgis" c="ml-px size-[11px]" />
        <h1 className="ml-[3px] font-['Open_Sans','Noto_Sans',sans-serif] text-[10px] text-[#101820]">QGIS2.8.2-Wien</h1>
        <div className="ml-auto flex h-3 self-start overflow-hidden rounded-b-xs border border-t-0 border-[#26375c]">
          <button type="button" aria-label="minimize" className="flex w-6 items-center justify-center border-r border-[#26375c] bg-linear-to-b from-[#a9bddb] to-[#5b7eb3]"><span className="mt-1 h-[3px] w-2 border border-[#334] bg-white" /></button>
          <button type="button" aria-label="restore" className="flex w-5 items-center justify-center border-r border-[#26375c] bg-linear-to-b from-[#a9bddb] to-[#5b7eb3]"><svg viewBox="0 0 10 10" className="size-[10px]"><path d="M3.500 1h5.500v5H7M1 3.500h6v5.500H1z" fill="none" stroke="#fff" strokeWidth="1.600" /></svg></button>
          <button type="button" aria-label="close" className="flex w-7 items-center justify-center bg-linear-to-b from-[#d88a7a] to-[#b92f1a]"><svg viewBox="0 0 10 10" className="size-[9px]"><path d="M2 2l6 6M8 2L2 8" stroke="#fff" strokeWidth="2.400" /></svg></button>
        </div>
      </header>

      <nav className="flex h-4 shrink-0 items-center border-t border-[#4b5f8a] bg-[#f3f3f3] pl-[7px] text-[8px] whitespace-nowrap text-black">
        {menus.map(([t, w]) => <button key={t} type="button" className={`h-3 shrink-0 text-left ${w}`}>{t}</button>)}
        <div className="relative h-3 w-9 shrink-0">
          <button type="button" className="h-3 w-full border border-[#8a8a8a] bg-[#dcdcdc] text-center">Web(W)</button>
          <WebMenu />
        </div>
        <button type="button" className="ml-[7px] h-3 w-[42px] shrink-0 text-left">MMQGIS</button>
        <button type="button" className="h-3 w-[68px] shrink-0 text-left">プロセッシング(C)</button>
        <button type="button" className="h-3 shrink-0 text-left">ヘルプ(H)</button>
      </nav>

      <div className="shrink-0 border-t border-[#c9c9c9] pb-px">
        <Bar>
          <Grip w="w-[11px]" /><Group w="w-[147px]" items="newfile open save saveas composer wrench" /><Grip w="w-[14px]" />
          <button type="button" aria-label="touch" className="flex h-6 w-6 shrink-0 items-center justify-center rounded-xs border border-[#a5a5a5] bg-[#d6d6d6]"><Icon n="touch" /></button>
          <div className="w-[3px] shrink-0" /><Group w="w-[223px]" items="hand pansel zoomin zoomout zoom11 zoomfull zoomsel zoomlayer zoomlast" />
          <div className="w-[125px] shrink-0" /><Tool n="select" /><Drop w="w-[15px]" c="border-t-[#999]" />
          <Group w="w-[121px]" items="deselect expr table abacus ruler" /><Drop w="w-[14px]" />
          <Group w="w-[97px]" items="balloon bookadd book textann" /><Drop w="w-[12px]" />
        </Bar>
        <Bar>
          <Grip w="w-[11px]" /><Group w="w-[248px]" items="pencils pencil saveg dots blobadd node trash cut copy paste" /><More w="w-[22px]" /><Grip w="w-[6px]" />
          <Group w="w-[147px]" items="tag tagy tagpin tageye tagbox tag" /><div className="w-[107px] shrink-0" /><Tool n="purple" /><Grip w="w-[14px]" />
          <Group w="w-[121px]" items="bluecyl red grayo star info" /><Grip w="w-[15px]" /><Group w="w-[46px]" items="helpbook whats" /><Grip w="w-[17px]" />
          <Group w="w-[120px]" items="cross compass sat topo bluesq" /><div className="flex-1" /><More w="w-[7px]" />
        </Bar>
        <Bar>
          <Grip w="w-[11px]" /><Group w="w-[350px]" items="triangle undo redo blobh circles ring part fillr ringx partx reshape offset split split2" />
          <div className="w-[15px] shrink-0" /><More w="w-[22px]" /><Grip w="w-[4px]" /><Tool n="hist" /><div className="w-[248px] shrink-0" />
          <Group w="w-[95px]" items="globe globev comma vnode" /><Drop w="w-[13px]" /><Tool n="satbox" />
          <div className="flex-1" /><Grip w="w-[8px]" /><Tool n="gras" /><div className="w-1 shrink-0" /><More w="w-[7px]" />
        </Bar>
      </div>

      <div className="flex min-h-0 flex-1">
        <aside className="w-[210px] shrink-0">
          <DockTitle t="レイヤ" />
          <div className="flex h-[22px] items-center gap-[7px] pb-1 pl-1">
            {["layers", "eye", "filter", "expand", "collapse", "remove"].map((n) => (
              <button key={n} type="button" aria-label={n} className="flex w-4 justify-center"><Icon n={n} c="size-[14px]" /></button>
            ))}
          </div>
          <Tree />
          <div className="mx-auto h-1 w-[66px] bg-[radial-gradient(circle,#c9c9c9_1px,transparent_1px)] bg-[length:4px_4px]" />
          <DockTitle t="最短経路" />
          <form className="py-[6px] pr-[7px] pl-[6px]">
            <PointField id="start" t="開始点" />
            <PointField id="end" t="終了点" />
            <div className="flex h-[19px] items-center justify-between pb-[3px]">
              <label htmlFor="crit">判定基準</label>
              <div className="grid w-[97px] items-center">
                <select id="crit" className={`${BTN} col-start-1 row-start-1 h-[15px] appearance-none pl-[3px]`}><option>長さ</option></select>
                <span className="pointer-events-none col-start-1 row-start-1 flex h-[13px] w-3 items-center justify-center justify-self-end border-l border-[#c4c4c4]"><span className="border-x-[3px] border-t-4 border-x-transparent border-t-black" /></span>
              </div>
            </div>
            <div className="flex h-[19px] items-center gap-[3px]"><label htmlFor="len" className="text-[8px]">長さ</label><input id="len" className={FIELD} /></div>
            <div className="flex h-[19px] items-center gap-[3px]"><label htmlFor="tm">時間</label><input id="tm" className={FIELD} /></div>
            <div className="mt-1 grid grid-cols-3 gap-[6px]">
              {["計算", "エクスポート", "クリア"].map((t) => <button key={t} type="button" className={`${BTN} h-[18px]`}>{t}</button>)}
            </div>
            <button type="button" className={`${BTN} mt-[5px] h-[19px] w-full gap-[2px]`}><Icon n="lifebuoy" c="size-3" />ヘルプ</button>
          </form>
        </aside>
        <div className="w-[6px] shrink-0 border-r border-[#b0b0b0]" />
        <main className="min-w-0 flex-1 border-t border-[#b0b0b0] bg-white"><Terrain /></main>
      </div>

      <footer className="flex h-5 shrink-0 items-center border-t border-[#c4c4c4] pt-1 pr-[9px] text-[8px] whitespace-nowrap">
        <button type="button" aria-label="extents" className="ml-auto flex size-[14px] items-center justify-center border border-[#bbb]"><Icon n="mouse" c="size-3" /></button>
        <label htmlFor="xy" className="ml-[7px] w-[26px] text-[9px]">座標:</label>
        <input id="xy" defaultValue="14925392,4083000" className="h-[15px] w-[221px] rounded-xs border border-[#b3b3b3] bg-white text-center" />
        <label htmlFor="sc" className="ml-1 w-[23px] text-[9px]">縮尺</label>
        <div className="grid w-[60px] items-center">
          <select id="sc" className="col-start-1 row-start-1 h-[15px] appearance-none rounded-xs border border-[#b3b3b3] bg-white pl-[2px]"><option>1:27,905</option></select>
          <span className="pointer-events-none col-start-1 row-start-1 flex h-[13px] w-3 items-center justify-center justify-self-end border-l border-[#c4c4c4]"><span className="border-x-[3px] border-t-4 border-x-transparent border-t-black" /></span>
        </div>
        <label htmlFor="rot" className="ml-[6px] w-[26px] text-[9px]">回転:</label>
        <input id="rot" defaultValue="0.0" className="h-4 w-[61px] border border-r-0 border-[#b3b3b3] bg-white pl-[2px]" />
        <div className="flex h-4 w-[11px] flex-col items-center justify-around border border-[#b3b3b3] bg-[#f4f4f4]">
          <span className="border-x-[3px] border-b-[3px] border-x-transparent border-b-black" /><span className="border-x-[3px] border-t-[3px] border-x-transparent border-t-black" />
        </div>
        <label className="ml-1 flex items-center gap-1">
          <span className="grid">
            <input type="checkbox" defaultChecked className="col-start-1 row-start-1 size-[10px] appearance-none bg-white" />
            <svg viewBox="0 0 10 10" className="col-start-1 row-start-1 size-[10px]"><path d="M2 2l6 6M8 2L2 8" stroke="#000" strokeWidth="2.500" /></svg>
          </span>
          <span className="w-[31px]">レンダ</span>
        </label>
        <button type="button" className="flex w-[95px] items-center gap-[2px]"><Icon n="crs" c="size-[13px]" />EPSG:3857 (OTF)</button>
        <button type="button" aria-label="messages"><Icon n="bubble" c="size-[14px]" /></button>
      </footer>
    </div>
  );
}
